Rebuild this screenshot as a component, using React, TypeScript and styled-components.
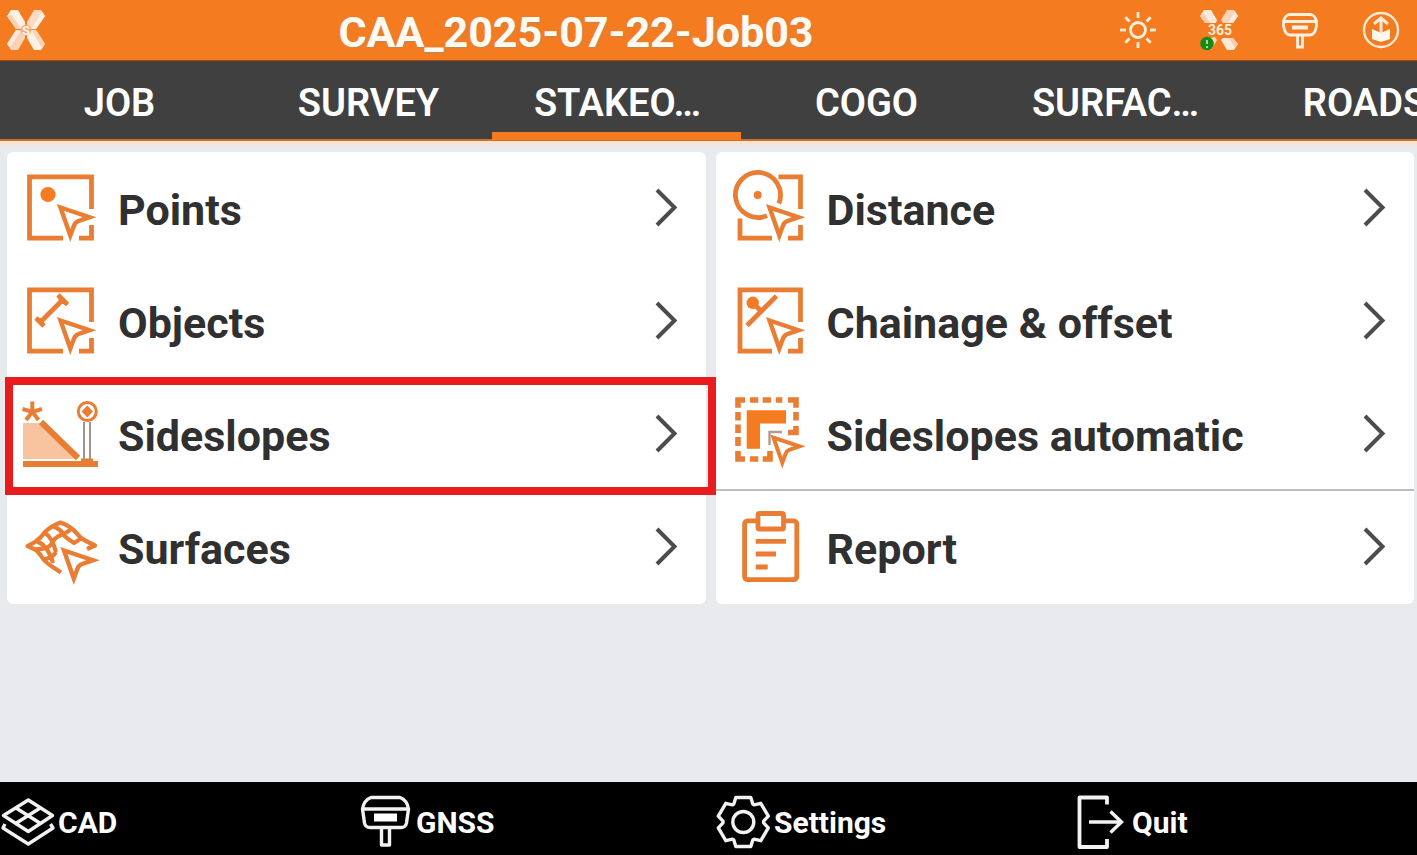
import React from "react";
import styled, { createGlobalStyle } from "styled-components";

const ORANGE = "#f47b20";
const ICON_ORANGE = "#e97d33";

const GlobalStyle = createGlobalStyle`
  * { box-sizing: border-box; }
  body {
    margin: 0;
    background: #e9eaee;
    font-family: Roboto, "Liberation Sans", sans-serif;
    overflow-x: hidden;
  }
  button {
    font: inherit;
    color: inherit;
    background: none;
    border: 0;
    padding: 0;
    cursor: pointer;
  }
`;

const Screen = styled.div`
  min-height: 100vh;
  display: flex;
  flex-direction: column;
  overflow: hidden;
`;

const Header = styled.header`
  display: flex;
  align-items: center;
  height: 61px;
  padding: 0 16px 0 6px;
  background: ${ORANGE};
  border-bottom: 1px solid #a84a10;
`;

const Title = styled.h1`
  flex: 1;
  margin: 0;
  padding: 4px 12px 0 0;
  text-align: center;
  font-size: 43px;
  line-height: 50px;
  font-weight: 700;
  color: #fffaf0;
  text-shadow: 1px 1px 1px #b98a5c;
`;

const StatusGroup = styled.div`
  display: flex;
  gap: 41px;
`;

const IconButton = styled.button`
  display: flex;
  width: 40px;
  height: 42px;
`;

const TabStrip = styled.div`
  background: #404040;
  margin-left: -6px;
`;

const TabBar = styled.nav`
  display: grid;
  grid-template-columns: repeat(6, 1fr);
  height: 80px;
  margin-right: -71px;
  border-bottom: 2px solid #c9712f;
`;

const Tab = styled.button<{ $active?: boolean }>`
  height: 79px;
  padding: 13px 0 0 2px;
  font-size: 38px;
  line-height: 48px;
  font-weight: 600;
  color: #fff;
  border-bottom: 8px solid ${(p) => (p.$active ? ORANGE : "transparent")};
`;

const Content = styled.main`
  flex: 1;
  display: grid;
  grid-template-columns: 1fr 1fr;
  align-items: start;
  gap: 10px;
  padding: 7px 3px 20px 7px;
  border-top: 4px solid #fbe3d0;
`;

const Card = styled.div`
  background: #fff;
  border-radius: 6px;
`;

const Row = styled.button<{ $divided?: boolean }>`
  position: relative;
  display: flex;
  align-items: center;
  width: 100%;
  height: 113px;
  padding: 0 25px 2px 13px;
  text-align: left;
  box-shadow: ${(p) => (p.$divided ? "inset 0 -2px #bdbdbd" : "none")};
`;

const RowLabel = styled.span`
  flex: 1;
  padding: 4px 0 0 18px;
  font-size: 43px;
  line-height: 50px;
  font-weight: 700;
  color: #303030;
  white-space: nowrap;
`;

const Highlight = styled.span`
  position: absolute;
  z-index: 1;
  inset: -1px -10px -4px -2px;
  border: 8px solid #e81c1c;
`;

const Footer = styled.footer`
  display: grid;
  grid-template-columns: repeat(4, 1fr);
  column-gap: 15px;
  height: 73px;
  padding-top: 8px;
  background: #000;
  color: #fff;
`;

const FooterButton = styled.button`
  display: flex;
  align-items: center;
  gap: 2px;
  font-size: 30px;
  line-height: 36px;
  font-weight: 700;
`;

/* ---------- shared pieces ---------- */

const Cursor = ({ transform }: { transform?: string }) => (
  <path
    d="M40.5 39.5L69.5 49.2L58 53.2Q55 54.4 54 57.5L50.3 67.5Z"
    fill="#fff"
    strokeWidth="4.4"
    transform={transform}
  />
);

const Glyph = ({ children }: { children: React.ReactNode }) => (
  <svg width="80" height="80" viewBox="0 0 80 80" fill="none" stroke={ICON_ORANGE} strokeWidth="4.8" aria-hidden>
    {children}
  </svg>
);

const Frame = () => <path d="M43 70.2H9.5V8.8H71.5V41M59 70.2H71.5V57" />;

const Chevron = () => (
  <svg width="28" height="44" viewBox="0 0 28 44" fill="none" stroke="#4c4c4c" strokeWidth="4" aria-hidden>
    <path d="M4 4L21.500 21.500L4 39" />
  </svg>
);

/* ---------- row icons ---------- */

const PointsIcon = () => (
  <Glyph>
    <Frame />
    <circle cx="28" cy="26.500" r="7.600" fill={ORANGE} stroke="none" />
    <Cursor />
  </Glyph>
);

const ObjectsIcon = () => (
  <Glyph>
    <Frame />
    <path d="M20 41.500L43 18.500M38 14L47.500 23.500M16 37L24 45" />
    <path d="M38 14L47.500 23.500L40 22ZM16 37L24 45L23 38Z" strokeWidth="1" fill={ICON_ORANGE} />
    <Cursor />
  </Glyph>
);

const SideslopesIcon = () => (
  <Glyph>
    <path d="M3 29H20L53 62V65H3Z" fill="#f8c49f" stroke="none" />
    <path d="M21 28L58 64" strokeWidth="6" />
    <path d="M3 70H78" strokeWidth="6" />
    <path d="M12.300 17.800V7.500M12.300 17.800L2.500 15M12.300 17.800L22 15M12.300 17.800L6 26M12.300 17.800L18.500 26" strokeWidth="4" />
    <path d="M64 28V65M70 28V65" stroke="#a3938c" strokeWidth="2" />
    <path d="M61 66H73" strokeWidth="3" />
    <circle cx="67.300" cy="17.500" r="9" strokeWidth="3" />
    <path d="M67.300 11.500L73 17.500L67.300 23.500L61.600 17.500Z" fill={ICON_ORANGE} stroke="none" />
  </Glyph>
);

const SurfacesIcon = () => (
  <Glyph>
    <g strokeWidth="4.200" strokeLinejoin="round">
      <path d="M41 65.500L32 59.500Q25 55 22.500 51Q19 45 15 42.500L7.500 39.200L15 35Q21 31 25 25Q31 19 40.500 15.500Q50 19 55.500 25Q60 31 66 34L75 38.500L67 42" />
      <path d="M15.500 42Q27 43 31.500 37Q35 30 41 28Q47 26 51 22" />
      <path d="M23 52.500Q33 51 36 45" />
      <path d="M17 34Q29 40 33 56M25 26Q32 30 36 45M33 19Q42 23 44.500 29Q49 33 54 36L62 31" />
    </g>
    <Cursor transform="translate(3.5 4)" />
  </Glyph>
);

const DistanceIcon = () => (
  <Glyph>
    <path d="M49.500 8.800H71.500V41M43 70.200H11V50.500M59 70.200H71.500V57" />
    <path d="M49.800 35.500A22.500 22.500 0 1 0 38 47.600" />
    <circle cx="28.700" cy="27" r="4" fill={ICON_ORANGE} stroke="none" />
    <Cursor />
  </Glyph>
);

const ChainageIcon = () => (
  <Glyph>
    <path d="M43 70.200H11V8.800H71.500V41M59 70.200H71.500V57" />
    <circle cx="23.700" cy="21.800" r="6.200" fill={ORANGE} stroke="none" />
    <path d="M18 44.500L47.500 15M24 22L32 30" />
    <Cursor />
  </Glyph>
);

const AutomaticIcon = () => (
  <Glyph>
    <path
      d="M9 13.800V6H16M21 6H29.300M33.700 6H42M46.700 6H53.300M59 6H67V13.800M67 18V26.500M67 32V38.500H59M9 18V26.500M9 30.500V39M9 43V52M9 57V65H16M21 65H29.300M33.700 65H41V57"
      strokeWidth="5.600"
    />
    <path d="M17.700 16.200H57V29.500H31V54.800H17.700Z" fill={ORANGE} stroke="none" />
    <path d="M53 38H40.500V51" stroke="#b09c90" strokeWidth="2.400" />
    <Cursor transform="translate(8 8) scale(.9)" />
  </Glyph>
);

const ReportIcon = () => (
  <Glyph>
    <rect x="15.600" y="13.800" width="52.200" height="58.800" rx="3" />
    <rect x="29" y="6.500" width="25.500" height="15.500" rx="1.500" fill="#fff" />
    <path d="M26.700 34.300H57M26.700 47H47M26.700 60H38.700" />
  </Glyph>
);

/* ---------- header icons ---------- */

const LogoIcon = () => (
  <svg width="40" height="42" viewBox="0 0 40 42" aria-hidden>
    <path d="M1 7L5 1H12L19 13V20L10 20Z" fill="#fff0e4" />
    <path d="M1 7L10 20L15 20L6 6Z" fill="#fbd3b6" />
    <path d="M39 7L35 1H28L21 13V20L30 20Z" fill="#fbdac2" />
    <path d="M39 7L36 3L25 20H30Z" fill="#fff0e4" />
    <path d="M1 35L5 41H12L19 29V21L10 21Z" fill="#fbd3b6" />
    <path d="M1 35L10 21L15 22L4 38Z" fill="#fdeadb" />
    <path d="M39 35L35 41H28L21 29V21L30 21Z" fill="#fff0e4" />
    <path d="M39 35L30 21L26 22L36 39Z" fill="#fbd3b6" />
    <circle cx="20" cy="21" r="5.500" fill="#f3ab7a" />
    <text x="20" y="26" textAnchor="middle" fontSize="13" fontWeight="700" fill="#fff6ee">
      S
    </text>
  </svg>
);

const SunIcon = () => (
  <svg width="40" height="42" viewBox="0 0 40 42" fill="none" stroke="#ffefdc" strokeWidth="2.800" aria-hidden>
    <circle cx="20" cy="21" r="7.500" />
    {[0, 45, 90, 135, 180, 225, 270, 315].map((a) => (
      <path key={a} d="M20 9V3" transform={`rotate(${a} 20 21)`} />
    ))}
  </svg>
);

const CloudIcon = () => (
  <svg width="40" height="42" viewBox="0 0 40 42" aria-hidden>
    <path d="M1 7L5 1H12L18 11L17 14H6Z" fill="#fdeadb" />
    <path d="M1 7L6 14H11L5 5Z" fill="#fbcdac" />
    <path d="M39 7L35 1H28L22 11L24 14H34Z" fill="#fbd3b6" />
    <path d="M39 7L36 2L29 14H34Z" fill="#fdeadb" />
    <path d="M39 35L35 41H28L22 31L24 29H34Z" fill="#fdeadb" />
    <path d="M39 35L34 29H30L36 39Z" fill="#fbcdac" />
    <path d="M12 41L18 31L16 28L8 30Z" fill="#fbd9c0" />
    <text x="21" y="26" textAnchor="middle" fontSize="14" fontWeight="700" fill="#ffeeda">
      365
    </text>
    <circle cx="8" cy="34.500" r="6.800" fill="#178a17" />
    <path d="M8 31V35M8 37V39" stroke="#a5dba0" strokeWidth="2" />
  </svg>
);

const ReceiverIcon = () => (
  <svg width="40" height="42" viewBox="0 0 40 42" fill="none" stroke="#fff0df" strokeWidth="2.800" aria-hidden>
    <path d="M9 5.500H31Q35 6.500 36.500 12V17Q35 26 30 26H10Q5 26 3.500 17V12Q5 6.500 9 5.500ZM3 12.500H37" />
    <path d="M12 18.500H28" strokeWidth="4" />
    <path d="M17.500 26V38H22.500V26" />
  </svg>
);

const UploadIcon = () => (
  <svg width="40" height="42" viewBox="0 0 40 42" fill="none" stroke="#ffead3" strokeWidth="2.400" aria-hidden>
    <circle cx="20" cy="21" r="17" />
    <path d="M11 20L20 24L29 20V30L20 33L11 30Z" fill="#fff8ef" stroke="none" />
    <path d="M20 25V11M13 15L20 9L27 15" strokeWidth="3" />
  </svg>
);

/* ---------- footer icons ---------- */

const FooterGlyph = ({ children }: { children: React.ReactNode }) => (
  <svg width="56" height="56" viewBox="0 0 56 56" fill="none" stroke="#f2f2f2" strokeWidth="3.400" strokeLinejoin="round" aria-hidden>
    {children}
  </svg>
);

const CadIcon = () => (
  <FooterGlyph>
    <path d="M28.300 5L52.500 20.500L28.300 36.500L3.500 20.500ZM15.600 12.700L40.600 28.500M40.600 12.700L15.600 28.500" />
    <path d="M5 29L3 33L28.300 49L53 33L50.500 29" />
  </FooterGlyph>
);

const GnssIcon = () => (
  <FooterGlyph>
    <path d="M13 2.500H42Q49 5 50.500 14L48.500 28Q47.500 32.500 43 32.500H12Q7.500 32.500 6.500 28L4.500 14Q6 5 13 2.500ZM4 14H51" />
    <rect x="16" y="18.500" width="23" height="8" fill="#fff" stroke="none" />
    <path d="M23.500 33V50H31.500V33" />
  </FooterGlyph>
);

const gearPath = () => {
  const tooth = [
    [-9.5, -18],
    [-7.5, -24.5],
    [7.5, -24.5],
    [9.5, -18],
  ];
  const points: string[] = [];
  for (let i = 0; i < 6; i++) {
    const a = (i * Math.PI) / 3;
    tooth.forEach(([x, y]) => {
      const px = 27.3 + x * Math.cos(a) - y * Math.sin(a);
      const py = 27 + x * Math.sin(a) + y * Math.cos(a);
      points.push(`${px.toFixed(1)} ${py.toFixed(1)}`);
    });
  }
  return `M${points.join("L")}Z`;
};

const SettingsIcon = () => (
  <FooterGlyph>
    <path d={gearPath()} />
    <circle cx="27.300" cy="27" r="10.500" />
  </FooterGlyph>
);

const QuitIcon = () => (
  <FooterGlyph>
    <path d="M33 9.500V2.500H5.500V52H33V44" strokeWidth="3.800" />
    <path d="M15 27H47.500M36.500 16.500L47.500 27L36.500 37.500" strokeLinejoin="miter" />
  </FooterGlyph>
);

/* ---------- data ---------- */

type Item = { label: string; Icon: React.FC; highlighted?: boolean; divided?: boolean };

const tabs = ["JOB", "SURVEY", "STAKEO…", "COGO", "SURFAC…", "ROADS"];
const activeTab = tabs[2];

const columns: Item[][] = [
  [
    { label: "Points", Icon: PointsIcon },
    { label: "Objects", Icon: ObjectsIcon },
    { label: "Sideslopes", Icon: SideslopesIcon, highlighted: true },
    { label: "Surfaces", Icon: SurfacesIcon },
  ],
  [
    { label: "Distance", Icon: DistanceIcon },
    { label: "Chainage & offset", Icon: ChainageIcon },
    { label: "Sideslopes automatic", Icon: AutomaticIcon, divided: true },
    { label: "Report", Icon: ReportIcon },
  ],
];

const statuses: { label: string; Icon: React.FC }[] = [
  { label: "Brightness", Icon: SunIcon },
  { label: "Cloud service", Icon: CloudIcon },
  { label: "Receiver", Icon: ReceiverIcon },
  { label: "Upload", Icon: UploadIcon },
];

const actions: { label: string; Icon: React.FC }[] = [
  { label: "CAD", Icon: CadIcon },
  { label: "GNSS", Icon: GnssIcon },
  { label: "Settings", Icon: SettingsIcon },
  { label: "Quit", Icon: QuitIcon },
];

export default function App() {
  return (
    <Screen>
      <GlobalStyle />
      <Header>
        <IconButton aria-label="Main menu">
          <LogoIcon />
        </IconButton>
        <Title>CAA_2025-07-22-Job03</Title>
        <StatusGroup>
          {statuses.map(({ label, Icon }) => (
            <IconButton key={label} aria-label={label}>
              <Icon />
            </IconButton>
          ))}
        </StatusGroup>
      </Header>
      <TabStrip>
        <TabBar>
          {tabs.map((tab) => (
            <Tab key={tab} $active={tab === activeTab}>
              {tab}
            </Tab>
          ))}
        </TabBar>
      </TabStrip>
      <Content>
        {columns.map((items, i) => (
          <Card key={i}>
            {items.map(({ label, Icon, highlighted, divided }) => (
              <Row key={label} $divided={divided}>
                <Icon />
                <RowLabel>{label}</RowLabel>
                <Chevron />
                {highlighted && <Highlight />}
              </Row>
            ))}
          </Card>
        ))}
      </Content>
      <Footer>
        {actions.map(({ label, Icon }) => (
          <FooterButton key={label}>
            <Icon />
            {label}
          </FooterButton>
        ))}
      </Footer>
    </Screen>
  );
}
